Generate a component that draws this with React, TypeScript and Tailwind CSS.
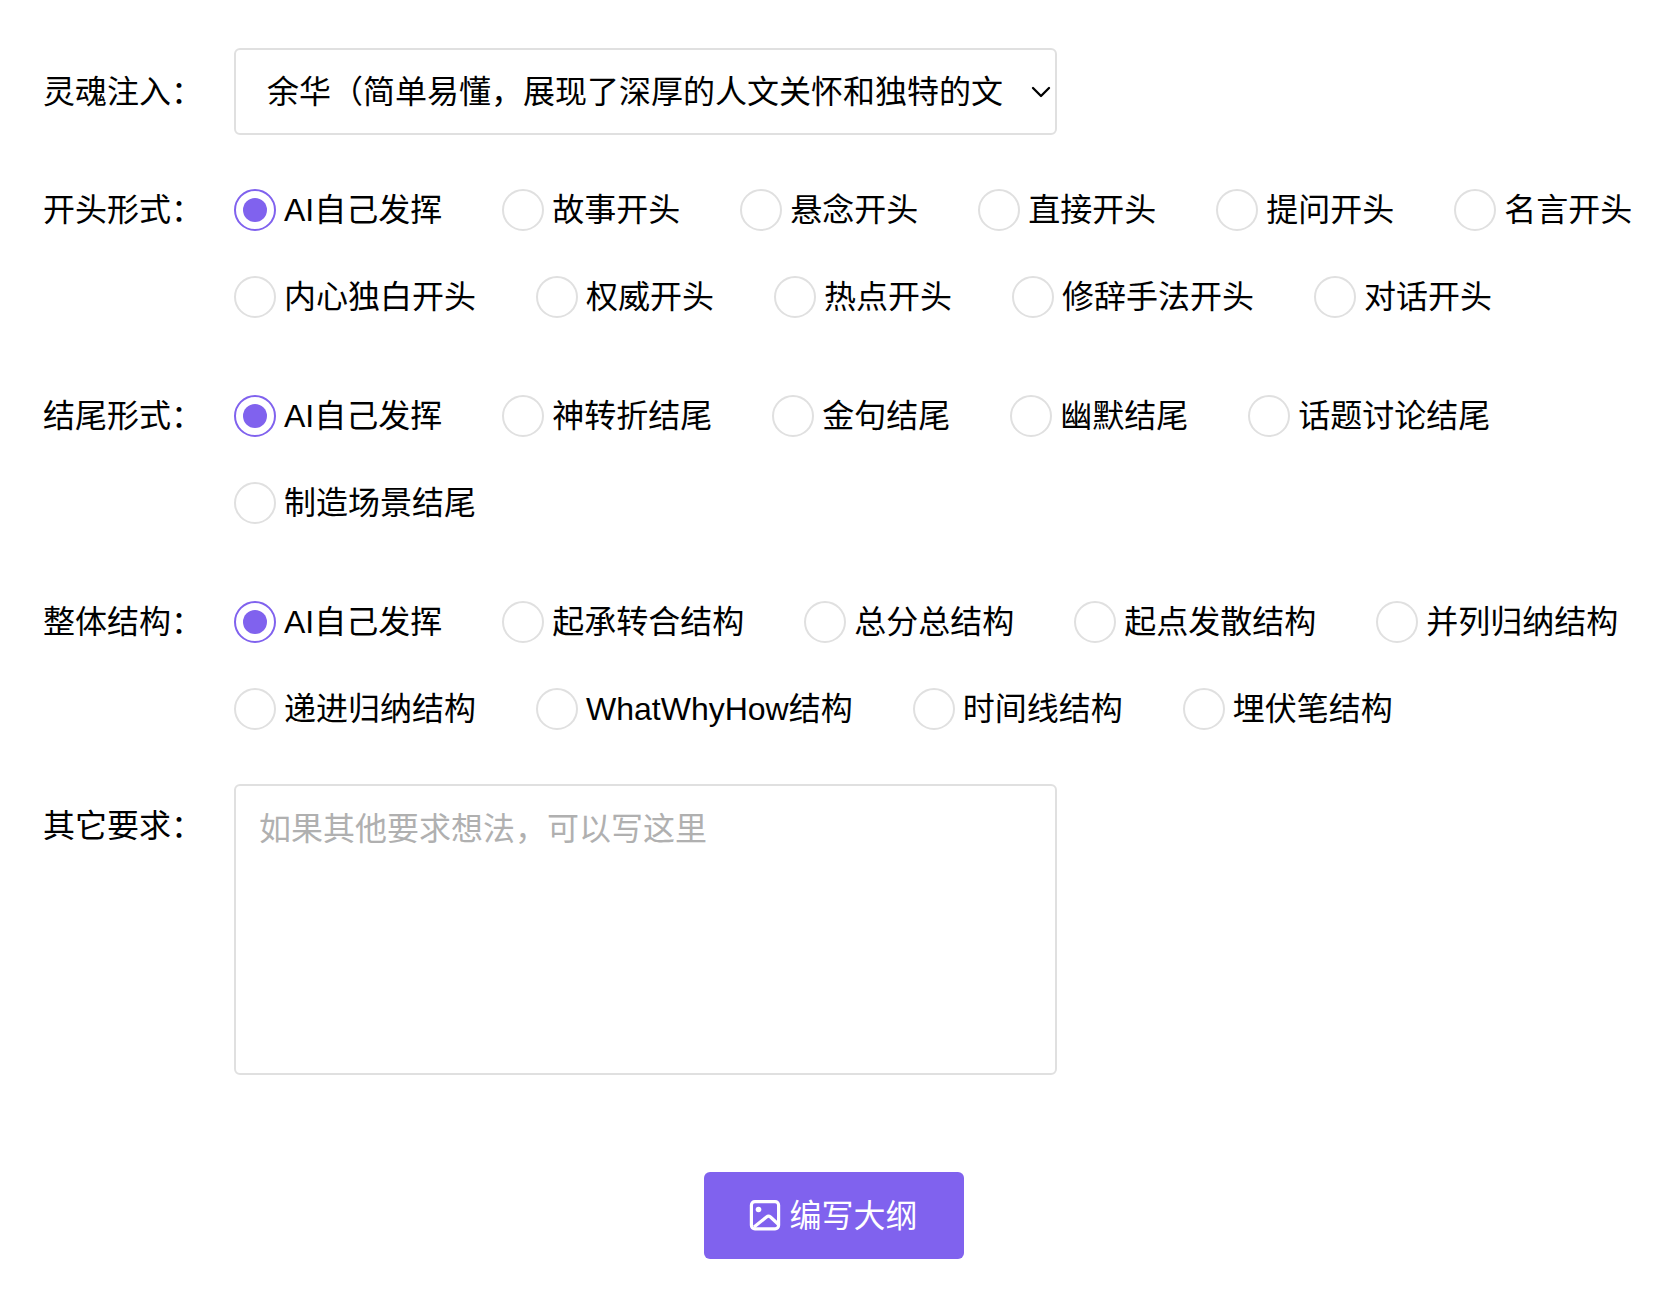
import React, { useState } from 'react';
import { ChevronDown } from 'lucide-react';

const AUTHORS = ['余华（简单易懂，展现了深厚的人文关怀和独特的文'];

const OPENINGS = [
    'AI自己发挥',
    '故事开头',
    '悬念开头',
    '直接开头',
    '提问开头',
    '名言开头',
    '内心独白开头',
    '权威开头',
    '热点开头',
    '修辞手法开头',
    '对话开头'
];

const ENDINGS = ['AI自己发挥', '神转折结尾', '金句结尾', '幽默结尾', '话题讨论结尾', '制造场景结尾'];

const STRUCTURES = [
    'AI自己发挥',
    '起承转合结构',
    '总分总结构',
    '起点发散结构',
    '并列归纳结构',
    '递进归纳结构',
    'WhatWhyHow结构',
    '时间线结构',
    '埋伏笔结构'
];

const ImageIcon: React.FC = () => (
    <svg className="w-8 h-8" viewBox="0 0 32 32" fill="none" stroke="currentColor" strokeWidth={3.2} strokeLinejoin="round" aria-hidden="true">
        <rect x="2.4" y="1.6" width="27.2" height="27.2" rx="3.5" />
        <circle cx="9.5" cy="9.5" r="2.8" fill="currentColor" stroke="none" />
        <path d="M5 27L17.5 17Q19.5 15.4 21.5 17L29 24" />
    </svg>
);

interface RadioGroupProps {
    name: string;
    label: string;
    options: string[];
}

const RadioGroup: React.FC<RadioGroupProps> = ({ name, label, options }) => {
    const [value, setValue] = useState(options[0]);

    return (
        <div role="radiogroup" aria-labelledby={`${name}-label`} className="flex items-start pb-[23px]">
            <span id={`${name}-label`} className="w-[191px] shrink-0 leading-[42px]">{label}</span>
            <div className="flex-1 flex flex-wrap gap-x-[60px] gap-y-[45px]">
                {options.map(option => (
                    <label key={option} className="h-[42px] flex items-center gap-2 whitespace-nowrap cursor-pointer">
                        <input
                            type="radio"
                            name={name}
                            value={option}
                            checked={value === option}
                            onChange={() => setValue(option)}
                            className="peer sr-only"
                        />
                        <span className="w-[42px] h-[42px] shrink-0 flex items-center justify-center rounded-full border-2 border-[#e0e0e0] peer-checked:border-[#8062ee] peer-checked:[&>span]:bg-[#8062ee]">
                            <span className="w-6 h-6 rounded-full" />
                        </span>
                        <span>{option}</span>
                    </label>
                ))}
            </div>
        </div>
    );
};

const App: React.FC = () => {
    const [author, setAuthor] = useState(AUTHORS[0]);
    const [extra, setExtra] = useState('');

    return (
        <form
            onSubmit={e => e.preventDefault()}
            className="min-h-screen bg-white pt-12 pl-[43px] pr-7 pb-9 flex flex-col gap-[54px] text-[32px] leading-10 text-black font-['Liberation_Sans','Noto_Sans_CJK_SC',sans-serif]"
        >
            <div className="flex items-center">
                <label htmlFor="author" className="w-[191px] shrink-0">灵魂注入：</label>
                <div className="relative flex-1 max-w-[823px]">
                    <select
                        id="author"
                        value={author}
                        onChange={e => setAuthor(e.target.value)}
                        className="w-full h-[87px] pl-[31px] pr-12 appearance-none rounded-md border-2 border-[#e0e0e0] bg-white"
                    >
                        {AUTHORS.map(item => (
                            <option key={item} value={item}>{item}</option>
                        ))}
                    </select>
                    <ChevronDown className="absolute right-0 top-7 w-8 h-8 pointer-events-none" strokeWidth={1.75} />
                </div>
            </div>

            <RadioGroup name="opening" label="开头形式：" options={OPENINGS} />
            <RadioGroup name="ending" label="结尾形式：" options={ENDINGS} />
            <RadioGroup name="structure" label="整体结构：" options={STRUCTURES} />

            <div className="-mt-[23px] flex items-start">
                <label htmlFor="extra" className="w-[191px] shrink-0 pt-[22px]">其它要求：</label>
                <textarea
                    id="extra"
                    value={extra}
                    onChange={e => setExtra(e.target.value)}
                    placeholder="如果其他要求想法，可以写这里"
                    className="flex-1 max-w-[823px] h-[291px] px-[23px] py-[23px] resize-none rounded-md border-2 border-[#e0e0e0] placeholder:text-[#b0b0b0]"
                />
            </div>

            <button type="submit" className="mt-[43px] mr-5 w-[260px] h-[87px] self-center flex items-center justify-center gap-2 rounded-md bg-[#8062ee] text-white cursor-pointer">
                <ImageIcon />
                编写大纲
            </button>
        </form>
    );
};

export default App;
